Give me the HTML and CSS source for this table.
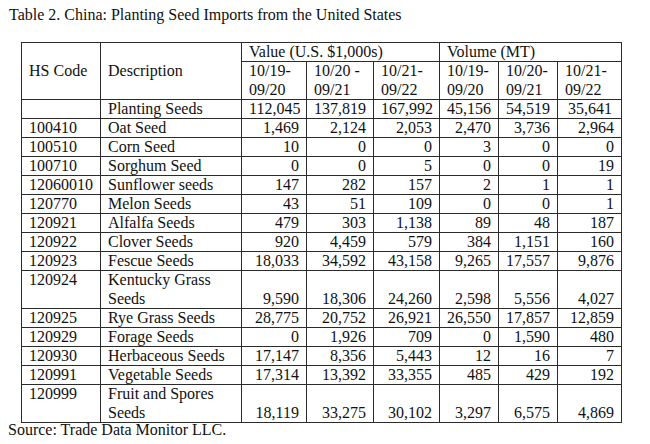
FILE: index.html
```html
<!DOCTYPE html>
<html>
<head>
<meta charset="utf-8">
<link rel="stylesheet" href="styles.css">
</head>
<body>
<div class="title">Table 2. China: Planting Seed Imports from the United States</div>
<table class="seeds">
  <colgroup>
    <col class="c-code"><col class="c-desc"><col class="c-v1"><col class="c-v2"><col class="c-v3"><col class="c-m1"><col class="c-m2"><col class="c-m3">
  </colgroup>
  <thead>
    <tr>
      <th rowspan="2" class="mid">HS Code</th>
      <th rowspan="2" class="mid">Description</th>
      <th colspan="3">Value (U.S. $1,000s)</th>
      <th colspan="3">Volume (MT)</th>
    </tr>
    <tr class="two">
      <th>10/19-<br>09/20</th>
      <th>10/20 -<br>09/21</th>
      <th>10/21-<br>09/22</th>
      <th>10/19-<br>09/20</th>
      <th>10/20-<br>09/21</th>
      <th>10/21-<br>09/22</th>
    </tr>
  </thead>
  <tbody>
    <tr><td></td><td>Planting Seeds</td><td class="n">112,045</td><td class="n">137,819</td><td class="n">167,992</td><td class="n">45,156</td><td class="n">54,519</td><td class="n last">35,641</td></tr>
    <tr><td>100410</td><td>Oat Seed</td><td class="n">1,469</td><td class="n">2,124</td><td class="n">2,053</td><td class="n">2,470</td><td class="n">3,736</td><td class="n">2,964</td></tr>
    <tr><td>100510</td><td>Corn Seed</td><td class="n">10</td><td class="n">0</td><td class="n">0</td><td class="n">3</td><td class="n">0</td><td class="n">0</td></tr>
    <tr><td>100710</td><td>Sorghum Seed</td><td class="n">0</td><td class="n">0</td><td class="n">5</td><td class="n">0</td><td class="n">0</td><td class="n">19</td></tr>
    <tr><td>12060010</td><td>Sunflower seeds</td><td class="n">147</td><td class="n">282</td><td class="n">157</td><td class="n">2</td><td class="n">1</td><td class="n">1</td></tr>
    <tr><td>120770</td><td>Melon Seeds</td><td class="n">43</td><td class="n">51</td><td class="n">109</td><td class="n">0</td><td class="n">0</td><td class="n">1</td></tr>
    <tr><td>120921</td><td>Alfalfa Seeds</td><td class="n">479</td><td class="n">303</td><td class="n">1,138</td><td class="n">89</td><td class="n">48</td><td class="n">187</td></tr>
    <tr><td>120922</td><td>Clover Seeds</td><td class="n">920</td><td class="n">4,459</td><td class="n">579</td><td class="n">384</td><td class="n">1,151</td><td class="n">160</td></tr>
    <tr><td>120923</td><td>Fescue Seeds</td><td class="n">18,033</td><td class="n">34,592</td><td class="n">43,158</td><td class="n">9,265</td><td class="n">17,557</td><td class="n">9,876</td></tr>
    <tr class="two"><td>120924</td><td>Kentucky Grass Seeds</td><td class="n">9,590</td><td class="n">18,306</td><td class="n">24,260</td><td class="n">2,598</td><td class="n">5,556</td><td class="n">4,027</td></tr>
    <tr><td>120925</td><td>Rye Grass Seeds</td><td class="n">28,775</td><td class="n">20,752</td><td class="n">26,921</td><td class="n">26,550</td><td class="n">17,857</td><td class="n">12,859</td></tr>
    <tr><td>120929</td><td>Forage Seeds</td><td class="n">0</td><td class="n">1,926</td><td class="n">709</td><td class="n">0</td><td class="n">1,590</td><td class="n">480</td></tr>
    <tr><td>120930</td><td>Herbaceous Seeds</td><td class="n">17,147</td><td class="n">8,356</td><td class="n">5,443</td><td class="n">12</td><td class="n">16</td><td class="n">7</td></tr>
    <tr><td>120991</td><td>Vegetable Seeds</td><td class="n">17,314</td><td class="n">13,392</td><td class="n">33,355</td><td class="n">485</td><td class="n">429</td><td class="n">192</td></tr>
    <tr class="two"><td>120999</td><td>Fruit and Spores Seeds</td><td class="n">18,119</td><td class="n">33,275</td><td class="n">30,102</td><td class="n">3,297</td><td class="n">6,575</td><td class="n">4,869</td></tr>
  </tbody>
</table>
<div class="source">Source: Trade Data Monitor LLC.</div>
</body>
</html>
```

FILE: styles.css
```css
html, body {
  background: #ffffff;
}
body {
  margin: 0;
  padding: 6px 8px 0 8px;
  font-family: "Liberation Serif", "Times New Roman", serif;
  font-size: 16px;
  color: #111;
}
.title {
  line-height: 18px;
  padding-left: 1px;
}
.seeds {
  margin: 18px 0 0 13px;
  border-collapse: collapse;
  table-layout: fixed;
  width: 601px;
}
.c-code { width: 79px; }
.c-desc { width: 141px; }
.c-v1 { width: 65px; }
.c-v2 { width: 67px; }
.c-v3 { width: 66px; }
.c-m1 { width: 59px; }
.c-m2 { width: 59px; }
.c-m3 { width: 64px; }
.seeds th,
.seeds td {
  border: 1px solid #2b2b2b;
  padding: 0 7px;
  line-height: 18px;
  font-weight: normal;
  text-align: left;
  vertical-align: top;
  white-space: normal;
}
.seeds tr.two th,
.seeds tr.two td {
  line-height: 18.5px;
}
.seeds th.mid {
  vertical-align: middle;
}
.seeds td.n {
  text-align: right;
  vertical-align: bottom;
}
.seeds td.last {
  padding-right: 9px;
}
.source {
  line-height: 14px;
}
```
